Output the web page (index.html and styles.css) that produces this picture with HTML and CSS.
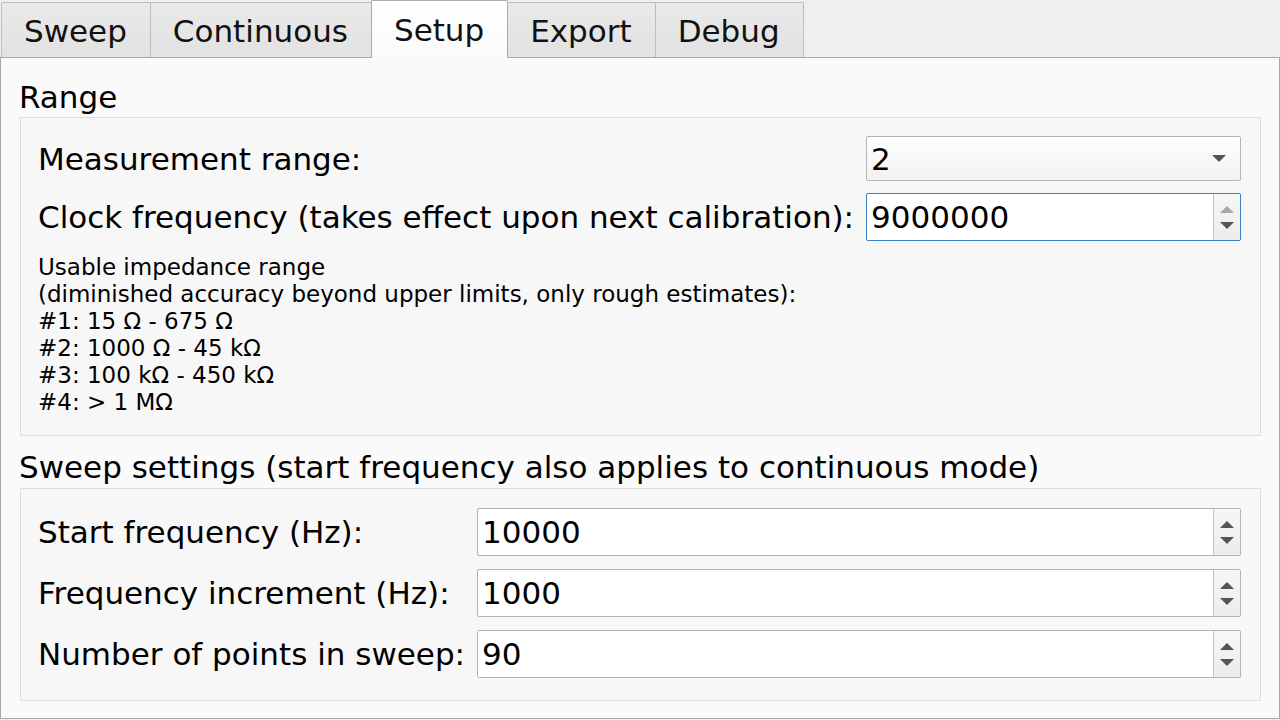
FILE: index.html
```html
<!DOCTYPE html>
<html>
<head>
<meta charset="utf-8">
<link rel="stylesheet" href="styles.css">
</head>
<body>
<div class="window">
  <div class="tabbar">
    <div class="tab">Sweep</div>
    <div class="tab">Continuous</div>
    <div class="tab tab-active">Setup</div>
    <div class="tab">Export</div>
    <div class="tab">Debug</div>
  </div>
  <div class="panel">
    <div class="group-title">Range</div>
    <div class="group">
      <div class="form form-range">
        <div class="label">Measurement range:</div>
        <div class="combo">
          <span class="value">2</span>
          <span class="combo-arrow"></span>
        </div>
        <div class="label">Clock frequency (takes effect upon next calibration):</div>
        <div class="spin spin-focus">
          <span class="value">9000000</span>
          <span class="spin-buttons">
            <span class="arrow-up arrow-disabled"></span>
            <span class="arrow-down"></span>
          </span>
        </div>
        <div class="note">Usable impedance range<br>(diminished accuracy beyond upper limits, only rough estimates):<br>#1: 15 Ω - 675 Ω<br>#2: 1000 Ω - 45 kΩ<br>#3: 100 kΩ - 450 kΩ<br>#4: &gt; 1 MΩ</div>
      </div>
    </div>
    <div class="group-title group-title-second">Sweep settings (start frequency also applies to continuous mode)</div>
    <div class="group group-sweep">
      <div class="form form-sweep">
        <div class="label">Start frequency (Hz):</div>
        <div class="spin">
          <span class="value">10000</span>
          <span class="spin-buttons">
            <span class="arrow-up"></span>
            <span class="arrow-down"></span>
          </span>
        </div>
        <div class="label">Frequency increment (Hz):</div>
        <div class="spin">
          <span class="value">1000</span>
          <span class="spin-buttons">
            <span class="arrow-up"></span>
            <span class="arrow-down"></span>
          </span>
        </div>
        <div class="label">Number of points in sweep:</div>
        <div class="spin">
          <span class="value">90</span>
          <span class="spin-buttons">
            <span class="arrow-up"></span>
            <span class="arrow-down"></span>
          </span>
        </div>
      </div>
    </div>
  </div>
</div>
</body>
</html>
```
FILE: styles.css
```css
* {
  box-sizing: border-box;
}

html, body {
  margin: 0;
  padding: 0;
}

body {
  width: 1280px;
  height: 720px;
  overflow: hidden;
  background: #efefef;
  font-family: "DejaVu Sans", sans-serif;
  font-size: 31px;
  color: #000;
}

.window {
  width: 1280px;
  height: 720px;
}

.tabbar {
  display: flex;
  align-items: flex-end;
  height: 57px;
  padding-left: 1px;
}

.tab {
  height: 55px;
  padding: 2px 23px 0 22px;
  display: flex;
  align-items: center;
  background: linear-gradient(#e9e9e9, #e2e2e2);
  border: 1px solid #bdbdbd;
  border-bottom: none;
  border-radius: 2px 2px 0 0;
  margin-right: -1px;
  color: #111;
}

.tab-active {
  height: 58px;
  margin-bottom: -1px;
  padding-top: 1px;
  background: linear-gradient(#ffffff, #fafafa);
  border-color: #ababab;
  position: relative;
  z-index: 1;
}

.panel {
  height: 662px;
  background: #fafafa;
  border: 1px solid #a9a9a9;
  padding: 21px 18px 0 18px;
}

.group-title {
  line-height: 36px;
  height: 36px;
  padding-left: 0;
  margin-bottom: 2px;
}

.group-title-second {
  margin-top: 13px;
  margin-bottom: 3px;
}

.group {
  margin-left: 1px;
  background: #f7f7f7;
  border: 1px solid #dddddd;
  border-radius: 1px;
  padding: 18px 19px 19px 15px;
}

.group-sweep {
  padding-top: 19px;
  padding-bottom: 22px;
}

.form {
  display: grid;
  grid-template-columns: auto 1fr;
  column-gap: 12px;
  align-items: center;
}

.form-range {
  row-gap: 12px;
}

.form-sweep {
  row-gap: 13px;
}

.label {
  white-space: nowrap;
  padding-left: 2px;
}

.value {
  flex: 1;
  padding-left: 4px;
  line-height: 36px;
}

.combo {
  height: 45px;
  display: flex;
  align-items: center;
  background: linear-gradient(#ffffff, #f2f2f2);
  border: 1px solid #b5b5b5;
  border-radius: 2px;
}

.combo-arrow {
  width: 0;
  height: 0;
  margin-right: 14px;
  border-left: 7px solid transparent;
  border-right: 7px solid transparent;
  border-top: 7px solid #555;
}

.spin {
  height: 48px;
  display: flex;
  align-items: stretch;
  background: #fff;
  border: 1px solid #b3b3b3;
  border-radius: 2px;
}

.spin .value {
  display: flex;
  align-items: center;
}

.spin-focus {
  border-color: #3b7fc4;
}

.spin-buttons {
  width: 27px;
  display: flex;
  flex-direction: column;
  align-items: center;
  justify-content: center;
  gap: 9px;
  border-left: 1px solid #c4c4c4;
  background: linear-gradient(#f7f7f7, #ececec);
  border-radius: 0 2px 2px 0;
}

.arrow-up {
  width: 0;
  height: 0;
  border-left: 7px solid transparent;
  border-right: 7px solid transparent;
  border-bottom: 7px solid #555;
}

.arrow-down {
  width: 0;
  height: 0;
  border-left: 7px solid transparent;
  border-right: 7px solid transparent;
  border-top: 7px solid #555;
}

.arrow-disabled {
  border-bottom-color: #a8a8a8;
}

.note {
  grid-column: 1 / 3;
  font-size: 23px;
  line-height: 27px;
  padding-left: 2px;
  margin-top: 1px;
}
```
